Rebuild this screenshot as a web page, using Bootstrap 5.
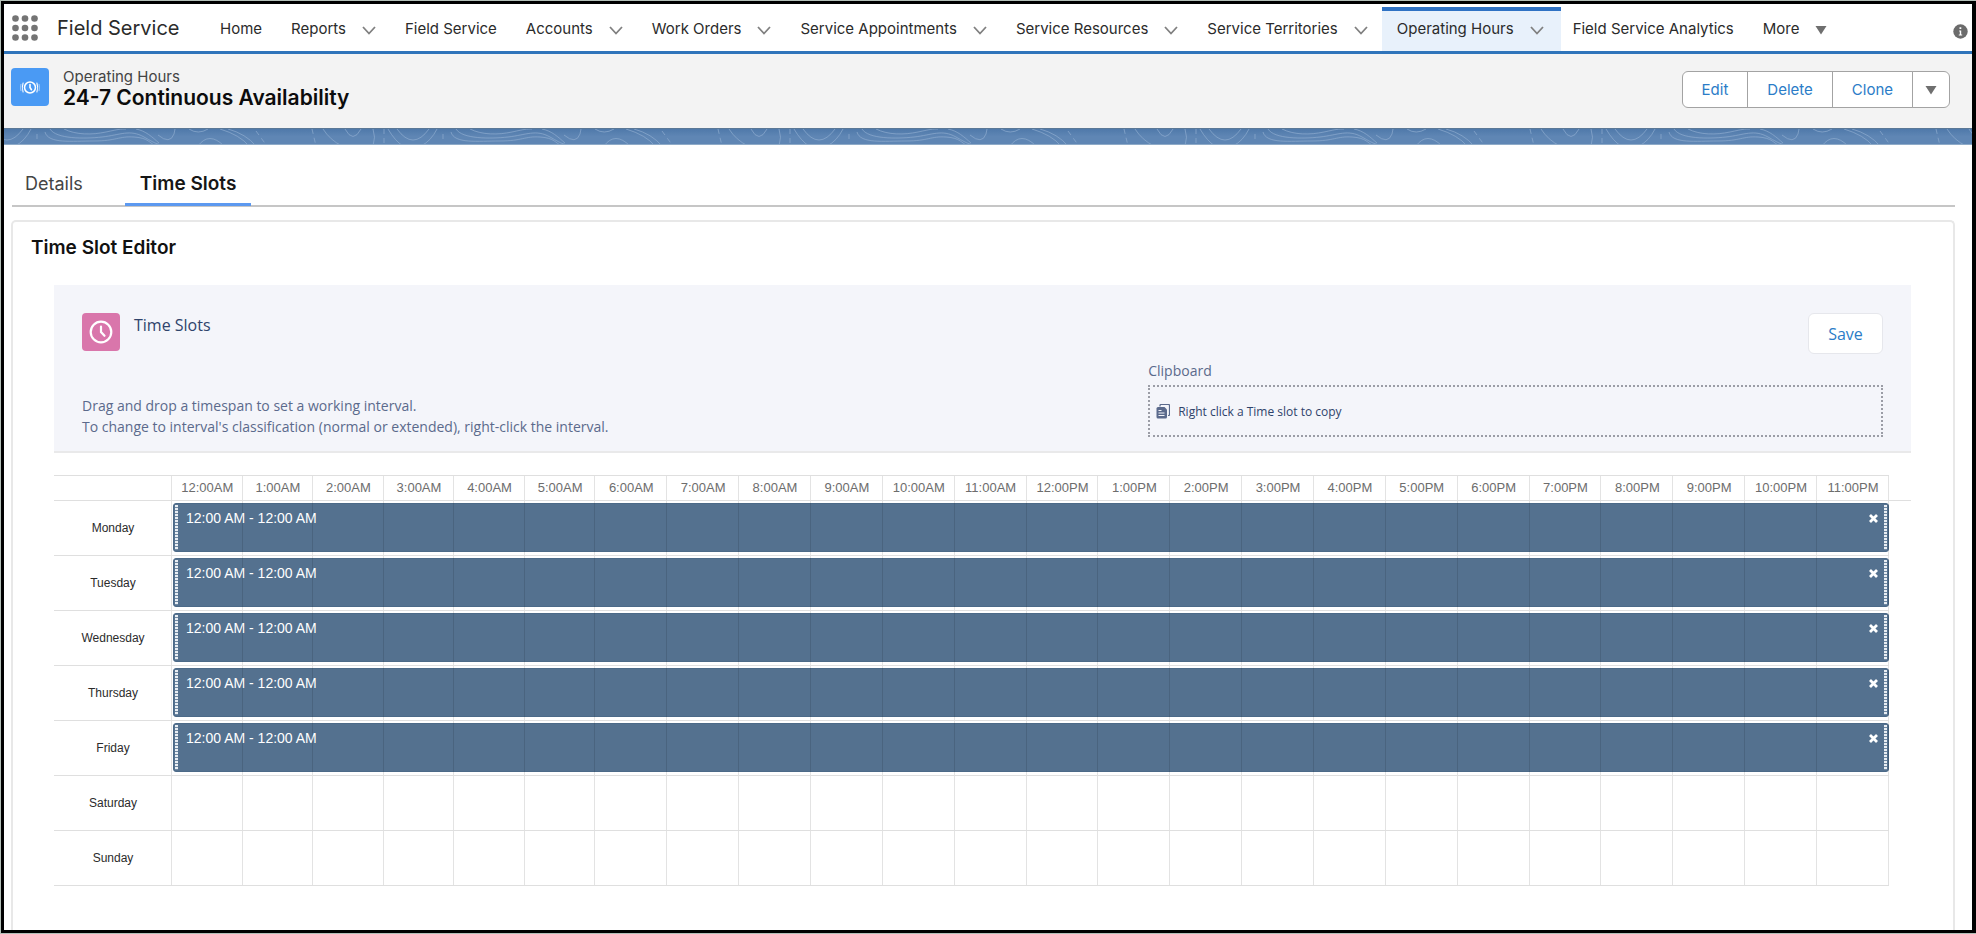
<!DOCTYPE html>
<html lang="en">
<head>
<meta charset="utf-8">
<meta name="viewport" content="width=device-width, initial-scale=1">
<title>24-7 Continuous Availability | Operating Hours</title>
<link rel="stylesheet" href="https://cdn.jsdelivr.net/npm/bootstrap@5.3.0/dist/css/bootstrap.min.css">
<style>
  html { background: #b4c0b9; }
  body { background: transparent; font-family: "Inter", "Liberation Sans", sans-serif; color: #222; }
  .app-frame { min-height: calc(100vh - 2px); margin: 1px 0 1px 1px; border: 3px solid #000; border-right-width: 4px; background: #fff; }

  /* Global navigation */
  .app-nav { height: 50px; border-bottom: 3px solid #2f74ba; background: #fff; padding-left: 8px; }
  .app-name { font-size: 20px; line-height: 24px; margin: 0 12px 0 19px; width: 136px; color: #2b2b2b; }
  .nav-entry { height: 44px; padding: 0 14px 3px 15px; border-top: 4px solid transparent; font-size: 15px; white-space: nowrap; }
  .nav-entry a { color: #2b2b2b; text-decoration: none; }
  .nav-entry.current { background: #e8f1fb; border-top-color: #2f72c4; padding-right: 17px; margin-right: -3px; }
  .icon-btn { border: 0; background: none; padding: 0; display: flex; align-items: center; }
  .nav-entry .icon-btn { margin-left: 16px; padding-top: 2px; }

  /* Record header */
  .record-head { height: 74px; padding: 14px 22px 0 7px; background: #f3f3f3; }
  .tile-icon { width: 38px; height: 38px; border-radius: 4px; flex: none; }
  .tile-blue { background: #4a9af4; }
  .tile-pink { background: #d976ab; }
  .record-title { margin-left: 14px; }
  .record-type { font-size: 15px; line-height: 18px; color: #444; }
  .record-name { font-size: 21px; line-height: 23px; font-weight: 600; color: #0c0c0c; margin: 0; }
  .record-actions { margin-top: 3px; }
  .record-actions .btn { font-size: 15px; line-height: 18px; height: 37px; padding: 0 19px; color: #2b7cc7; background: #fff; border: 1px solid #a3a3a3; }
  .record-actions .btn:last-child { padding: 0 12px; }
  .band { height: 17px; display: block; width: 100%; border-top: 1px solid #5b7896; border-bottom: 1px solid #8fabc8; background: linear-gradient(#4f79aa, #5f86b4 50%); }

  /* Tabs */
  .record-tabs { margin: 23px 17px 0 8px; border-bottom: 2px solid #c6c6c6; }
  .record-tabs a { font-size: 18px; line-height: 24px; padding: 4px 13px 6px; height: 37px; color: #444; text-decoration: none; }
  .record-tabs a.current { font-size: 19px; font-weight: 600; color: #161616; padding: 4px 15px 6px; margin: 0 0 -2px 29px; height: 38px; border-bottom: 3px solid #5c99f0; }

  /* Editor card */
  .editor { margin: 13px 17px 0 7px; border: 2px solid #e8e8e8; border-bottom: 0; border-radius: 5px 5px 0 0; padding: 14px 42px 0 41px; }
  .editor h2 { font-size: 19px; line-height: 24px; font-weight: 600; color: #111; margin: 0 0 25px -23px; }
  .slot-panel { font-family: "Open Sans", "Noto Sans", sans-serif; background: #f4f5fa; border-bottom: 2px solid #e9e9ea; padding: 28px 28px 14px; color: #5b6a8c; font-size: 14px; line-height: 21px; }
  .slot-panel h3 { font-size: 16px; line-height: 24px; font-weight: 400; color: #2f436b; margin: 0 0 0 14px; }
  .slot-panel .panel-foot { margin-top: 6px; }
  .save-btn { font-size: 16px; width: 75px; height: 41px; padding: 0; background: #fff; border: 1px solid #e6e7ec; color: #2b7cc7; }
  .clip-area { width: 40.8%; }
  .clip-box { height: 52px; margin-top: 4px; padding: 0 6px; border: 2px dotted #9b9da6; font-size: 12px; color: #2f436b; }

  /* Week grid */
  .week-grid { margin-top: 22px; width: 100%; table-layout: fixed; border-collapse: separate; border-spacing: 0; font-family: "Liberation Sans", Arial, sans-serif; font-size: 13px; line-height: 16px; }
  .week-grid th, .week-grid td { padding: 0; font-weight: 400; text-align: center; position: relative; white-space: nowrap; border-bottom: 1px solid #dfdfdf; }
  .week-grid thead th { height: 26px; border-top: 1px solid #dfdfdf; color: #6d6d6d; }
  .week-grid tbody tr { position: relative; height: 55px; }
  .week-grid tbody th { color: #2b2b2b; font-size: 12px; }
  .week-grid tbody td.tail { border-bottom: 0; }
  .week-grid th::after, .week-grid td:not(.tail)::after { content: ""; position: absolute; top: 0; bottom: 0; right: 0; width: 1px; background: rgba(0,0,0,.11); z-index: 2; pointer-events: none; }
  .week-grid .col-day { width: 118px; }
  .week-grid .col-early { width: 3.8%; }
  .week-grid .col-tail { width: 22px; }
  .slot-bar { position: absolute; top: 2px; bottom: 4px; left: 119px; right: 22px; background: #54718f; border: 1px solid #4c6a88; border-radius: 3px; padding: 6px 10px 0 12px; color: #fff; font-size: 14px; }
  .slot-bar::before, .slot-bar::after { content: ""; position: absolute; top: 1px; bottom: 1px; width: 3px; background: repeating-linear-gradient(#e9eef3 0 2px, #6f88a2 2px 3px); }
  .slot-bar::before { left: 1px; }
  .slot-bar::after { right: 1px; }
</style>
</head>
<body>
<div class="app-frame d-flex flex-column">

  <nav class="app-nav d-flex align-items-center" aria-label="Main">
    <button class="icon-btn" type="button" aria-label="App launcher">
      <svg width="26" height="26" viewBox="0 0 26 26" fill="#747474"><circle cx="3.500" cy="3.500" r="3.300"/><circle cx="13" cy="3.500" r="3.300"/><circle cx="22.500" cy="3.500" r="3.300"/><circle cx="3.500" cy="13" r="3.300"/><circle cx="13" cy="13" r="3.300"/><circle cx="22.500" cy="13" r="3.300"/><circle cx="3.500" cy="22.500" r="3.300"/><circle cx="13" cy="22.500" r="3.300"/><circle cx="22.500" cy="22.500" r="3.300"/></svg>
    </button>
    <span class="app-name">Field Service</span>
    <div class="d-flex align-self-end">
      <div class="nav-entry d-flex align-items-center"><a href="#">Home</a></div>
      <div class="nav-entry d-flex align-items-center"><a href="#">Reports</a><button class="icon-btn" type="button" aria-label="Reports list"><svg width="14" height="9" viewBox="0 0 14 9" fill="none" stroke="#808080" stroke-width="1.800"><path d="M1 1l6 6.500L13 1"/></svg></button></div>
      <div class="nav-entry d-flex align-items-center"><a href="#">Field Service</a></div>
      <div class="nav-entry d-flex align-items-center"><a href="#">Accounts</a><button class="icon-btn" type="button" aria-label="Accounts list"><svg width="14" height="9" viewBox="0 0 14 9" fill="none" stroke="#808080" stroke-width="1.800"><path d="M1 1l6 6.500L13 1"/></svg></button></div>
      <div class="nav-entry d-flex align-items-center"><a href="#">Work Orders</a><button class="icon-btn" type="button" aria-label="Work Orders list"><svg width="14" height="9" viewBox="0 0 14 9" fill="none" stroke="#808080" stroke-width="1.800"><path d="M1 1l6 6.500L13 1"/></svg></button></div>
      <div class="nav-entry d-flex align-items-center"><a href="#">Service Appointments</a><button class="icon-btn" type="button" aria-label="Service Appointments list"><svg width="14" height="9" viewBox="0 0 14 9" fill="none" stroke="#808080" stroke-width="1.800"><path d="M1 1l6 6.500L13 1"/></svg></button></div>
      <div class="nav-entry d-flex align-items-center"><a href="#">Service Resources</a><button class="icon-btn" type="button" aria-label="Service Resources list"><svg width="14" height="9" viewBox="0 0 14 9" fill="none" stroke="#808080" stroke-width="1.800"><path d="M1 1l6 6.500L13 1"/></svg></button></div>
      <div class="nav-entry d-flex align-items-center"><a href="#">Service Territories</a><button class="icon-btn" type="button" aria-label="Service Territories list"><svg width="14" height="9" viewBox="0 0 14 9" fill="none" stroke="#808080" stroke-width="1.800"><path d="M1 1l6 6.500L13 1"/></svg></button></div>
      <div class="nav-entry current d-flex align-items-center"><a href="#" aria-current="page">Operating Hours</a><button class="icon-btn" type="button" aria-label="Operating Hours list"><svg width="14" height="9" viewBox="0 0 14 9" fill="none" stroke="#808080" stroke-width="1.800"><path d="M1 1l6 6.500L13 1"/></svg></button></div>
      <div class="nav-entry d-flex align-items-center"><a href="#">Field Service Analytics</a></div>
      <div class="nav-entry d-flex align-items-center"><a href="#">More</a><button class="icon-btn" type="button" aria-label="More items"><svg width="12" height="9" viewBox="0 0 12 9" fill="#6f6f6f"><path d="M.5 0h11L6 8.500z"/></svg></button></div>
    </div>
    <button class="icon-btn ms-auto me-1 pt-2" type="button" aria-label="Information">
      <svg width="15" height="15" viewBox="0 0 15 15"><circle cx="7.500" cy="7.500" r="7.200" fill="#6b6b6b"/><path d="M6.200 6.400h2v4.200h1v1H5.800v-1h1V7.400h-.6zM6.500 3.300h1.800v1.700H6.500z" fill="#fff"/></svg>
    </button>
  </nav>

  <header class="record-head d-flex align-items-start">
    <span class="tile-icon tile-blue d-flex align-items-center justify-content-center">
      <svg width="20" height="15" viewBox="0 0 22 16" fill="none" stroke="#fff" stroke-linecap="round"><circle cx="11" cy="8" r="6" stroke-width="1.700"/><path d="M11 4.800V8l1.600 2.400" stroke-width="1.800"/><path d="M3.400 3Q1.600 8 3.400 13M18.600 3Q20.400 8 18.600 13" stroke-width="1.200"/><path d="M1 4.500Q.2 8 1 11.500M21 4.500Q21.800 8 21 11.500" stroke-width=".8" stroke-opacity=".7"/></svg>
    </span>
    <div class="record-title">
      <div class="record-type">Operating Hours</div>
      <h1 class="record-name">24-7 Continuous Availability</h1>
    </div>
    <div class="record-actions btn-group ms-auto" role="group" aria-label="Record actions">
      <button type="button" class="btn">Edit</button>
      <button type="button" class="btn">Delete</button>
      <button type="button" class="btn">Clone</button>
      <button type="button" class="btn" aria-label="More actions"><svg width="12" height="9" viewBox="0 0 12 9" fill="#6f6f6f"><path d="M.5 0h11L6 8.500z"/></svg></button>
    </div>
  </header>

  <!-- Contour line band; the tile repeats every 406 units -->
  <svg class="band" aria-hidden="true">
    <defs>
      <pattern id="contours" width="406" height="17" patternUnits="userSpaceOnUse" patternTransform="translate(-110 0)">
        <g fill="none" stroke="#8daccf" stroke-opacity=".7" stroke-width="1">
          <path d="M12 0l4 17M84 0v17M143 5v8M362 2l11 15" stroke-dasharray="5 4"/>
          <path d="M23 0Q30 11 42 17M45 0Q53 15 61 0M73 0Q76 8 73 17M88 0Q95 12 103 17M97 0Q113 22 129 0M137 0Q131 12 121 17"/>
          <path d="M151 3C154 15 178 12 200 12S225 7 240 8S255 14 262 17M156 0C162 10 190 10 208 8S236 0 250 8S263 15 273 17M170 0C182 6 198 6 212 3S226 0 232 0M242 0C252 2 258 8 265 14M264 6Q276 16 280 5L281 0"/>
          <path d="M295 0Q304 6 314 0M304 17Q315 2 330 17M326 0Q346 6 355 17M334 0Q352 5 362 17"/>
        </g>
      </pattern>
    </defs>
    <rect width="100%" height="17" fill="url(#contours)"/>
  </svg>

  <div class="record-tabs d-flex">
    <a href="#">Details</a>
    <a href="#" class="current" aria-current="true">Time Slots</a>
  </div>

  <main class="editor flex-grow-1">
    <h2>Time Slot Editor</h2>

    <section class="slot-panel">
      <div class="d-flex align-items-start">
        <span class="tile-icon tile-pink d-flex align-items-center justify-content-center">
          <svg width="24" height="24" viewBox="0 0 24 24" fill="none" stroke="#fff" stroke-width="2.200" stroke-linecap="round"><circle cx="12" cy="12" r="10.300"/><path d="M12 6.500V12l3.500 3.800"/></svg>
        </span>
        <h3>Time Slots</h3>
        <button type="button" class="btn save-btn ms-auto">Save</button>
      </div>
      <div class="panel-foot d-flex justify-content-between align-items-end">
        <p class="mb-0">Drag and drop a timespan to set a working interval.<br>To change to interval's classification (normal or extended), right-click the interval.</p>
        <div class="clip-area">
          <div>Clipboard</div>
          <div class="clip-box d-flex align-items-center">
            <svg class="me-2" width="14" height="15" viewBox="0 0 14 15"><path d="M4 2.500V1.500q0-1 1-1h7.500q1 0 1 1v9q0 1-1 1H12" fill="none" stroke="#5b6a8c" stroke-width="1.200"/><path d="M2 3h6.500L11 5.500V13q0 1.500-1.500 1.500H2Q.5 14.500.5 13V4.500Q.5 3 2 3z" fill="#5b6a8c"/><path d="M2.500 6.500h3M2.500 9h6M2.500 11.500h6" stroke="#f4f5fa"/></svg>
            <span>Right click a Time slot to copy</span>
          </div>
        </div>
      </div>
    </section>

    <table class="week-grid">
      <colgroup>
        <col class="col-day">
        <col class="col-early" span="6">
        <col span="18">
        <col class="col-tail">
      </colgroup>
      <thead>
        <tr>
          <th aria-label="Day"></th>
          <th>12:00AM</th><th>1:00AM</th><th>2:00AM</th><th>3:00AM</th><th>4:00AM</th><th>5:00AM</th>
          <th>6:00AM</th><th>7:00AM</th><th>8:00AM</th><th>9:00AM</th><th>10:00AM</th><th>11:00AM</th>
          <th>12:00PM</th><th>1:00PM</th><th>2:00PM</th><th>3:00PM</th><th>4:00PM</th><th>5:00PM</th>
          <th>6:00PM</th><th>7:00PM</th><th>8:00PM</th><th>9:00PM</th><th>10:00PM</th><th>11:00PM</th>
          <td class="tail"></td>
        </tr>
      </thead>
      <tbody id="weekRows"></tbody>
    </table>
  </main>
</div>

<script src="https://cdn.jsdelivr.net/npm/bootstrap@5.3.0/dist/js/bootstrap.bundle.min.js"></script>
<script>
  const week = [
    ['Monday', '12:00 AM - 12:00 AM'], ['Tuesday', '12:00 AM - 12:00 AM'], ['Wednesday', '12:00 AM - 12:00 AM'],
    ['Thursday', '12:00 AM - 12:00 AM'], ['Friday', '12:00 AM - 12:00 AM'], ['Saturday', ''], ['Sunday', '']
  ];
  const cross = '<svg width="9" height="9" viewBox="0 0 9 9" stroke="#fff" stroke-width="2.800"><path d="M1 1l7 7M8 1L1 8"/></svg>';
  document.getElementById('weekRows').innerHTML = week.map(([day, span]) => {
    const bar = span
      ? `<div class="slot-bar d-flex justify-content-between align-items-start"><span>${span}</span><button type="button" class="icon-btn mt-1" aria-label="Remove ${day} slot">${cross}</button></div>`
      : '';
    return `<tr><th scope="row">${day}</th>${'<td></td>'.repeat(24)}<td class="tail position-static">${bar}</td></tr>`;
  }).join('');
</script>
</body>
</html>
